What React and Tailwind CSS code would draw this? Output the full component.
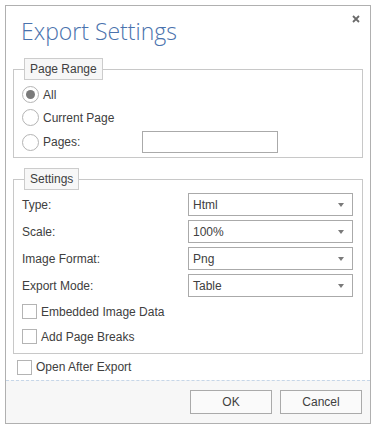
import React from "react";

const font = { fontFamily: '"Liberation Sans", Arial, sans-serif' };

const Radio = ({ checked }) => (
  <span className="flex h-[17px] w-[17px] shrink-0 items-center justify-center rounded-full border border-[#b4b4b4] bg-white">
    {checked && <span className="h-[9px] w-[9px] rounded-full bg-[#7a7a7a]" />}
  </span>
);

const Checkbox = () => (
  <span className="block h-[15px] w-[15px] shrink-0 border border-[#b4b4b4] bg-white" />
);

const Legend = ({ children }) => (
  <legend className="ml-[2px] h-[22px] border border-[#cccccc] bg-[#f7f7f7] px-[5px] leading-[20px]">
    {children}
  </legend>
);

const SelectRow = ({ label, value }) => (
  <div className="flex h-[27px] items-center">
    <span className="w-[166px]">{label}</span>
    <div className="flex h-[23px] w-[165px] items-center justify-between border border-[#aaaaaa] bg-white pl-[4px] pr-[8px]">
      <span>{value}</span>
      <svg width="6" height="4" viewBox="0 0 6 4">
        <path d="M0 0 H6 L3 4 Z" fill="#7a7a7a" />
      </svg>
    </div>
  </div>
);

export default function App() {
  return (
    <div className="bg-white w-[376px] h-[429px] pt-[5px] pl-[5px]" style={font}>
      <div className="flex h-[419px] w-[366px] flex-col border border-[#b0b0b0] bg-white text-[12px] text-[#404040]">
        {/* header */}
        <div className="relative h-[52px] pl-[15px] pt-[13px]">
          <h1
            className="text-[23px] font-light leading-[24px] text-[#4a72ad]"
            style={{ fontFamily: '"Open Sans", sans-serif' }}
          >
            Export Settings
          </h1>
          <button className="absolute right-[10px] top-[9px] flex h-[8px] w-[8px] items-center justify-center">
            <svg width="8" height="8" viewBox="0 0 8 8">
              <path d="M1 1 L7 7 M7 1 L1 7" stroke="#6b6b6b" strokeWidth="1.8" />
            </svg>
          </button>
        </div>

        {/* body */}
        <div className="px-[7px]">
          <fieldset className="border border-[#c8c8c8] pb-[2px] pl-[8px] pt-[3px]">
            <Legend>Page Range</Legend>
            <div className="flex h-[23px] items-center gap-[4px]">
              <Radio checked />
              <span>All</span>
            </div>
            <div className="flex h-[23px] items-center gap-[4px]">
              <Radio />
              <span>Current Page</span>
            </div>
            <div className="flex h-[26px] items-center gap-[4px]">
              <Radio />
              <span className="w-[95px]">Pages:</span>
              <div className="h-[22px] w-[136px] border border-[#aaaaaa] bg-white" />
            </div>
          </fieldset>

          <fieldset className="mt-[10px] border border-[#c8c8c8] pb-[4px] pl-[8px] pt-[1px]">
            <Legend>Settings</Legend>
            <SelectRow label="Type:" value="Html" />
            <SelectRow label="Scale:" value="100%" />
            <SelectRow label="Image Format:" value="Png" />
            <SelectRow label="Export Mode:" value="Table" />
            <div className="flex h-[25px] items-center gap-[4px]">
              <Checkbox />
              <span>Embedded Image Data</span>
            </div>
            <div className="flex h-[25px] items-center gap-[4px]">
              <Checkbox />
              <span>Add Page Breaks</span>
            </div>
          </fieldset>
        </div>

        <div className="flex h-[26px] items-center gap-[4px] pl-[11px]">
          <Checkbox />
          <span>Open After Export</span>
        </div>

        {/* footer */}
        <div className="flex flex-1 items-start justify-end gap-[8px] border-t border-dashed border-[#c6d6e8] bg-[#f7f7f7] pr-[8px] pt-[9px]">
          <button className="h-[24px] w-[82px] border border-[#aaaaaa] bg-[#fafafa] text-[12px] text-[#404040]">
            OK
          </button>
          <button className="h-[24px] w-[82px] border border-[#aaaaaa] bg-[#fafafa] text-[12px] text-[#404040]">
            Cancel
          </button>
        </div>
      </div>
    </div>
  );
}
